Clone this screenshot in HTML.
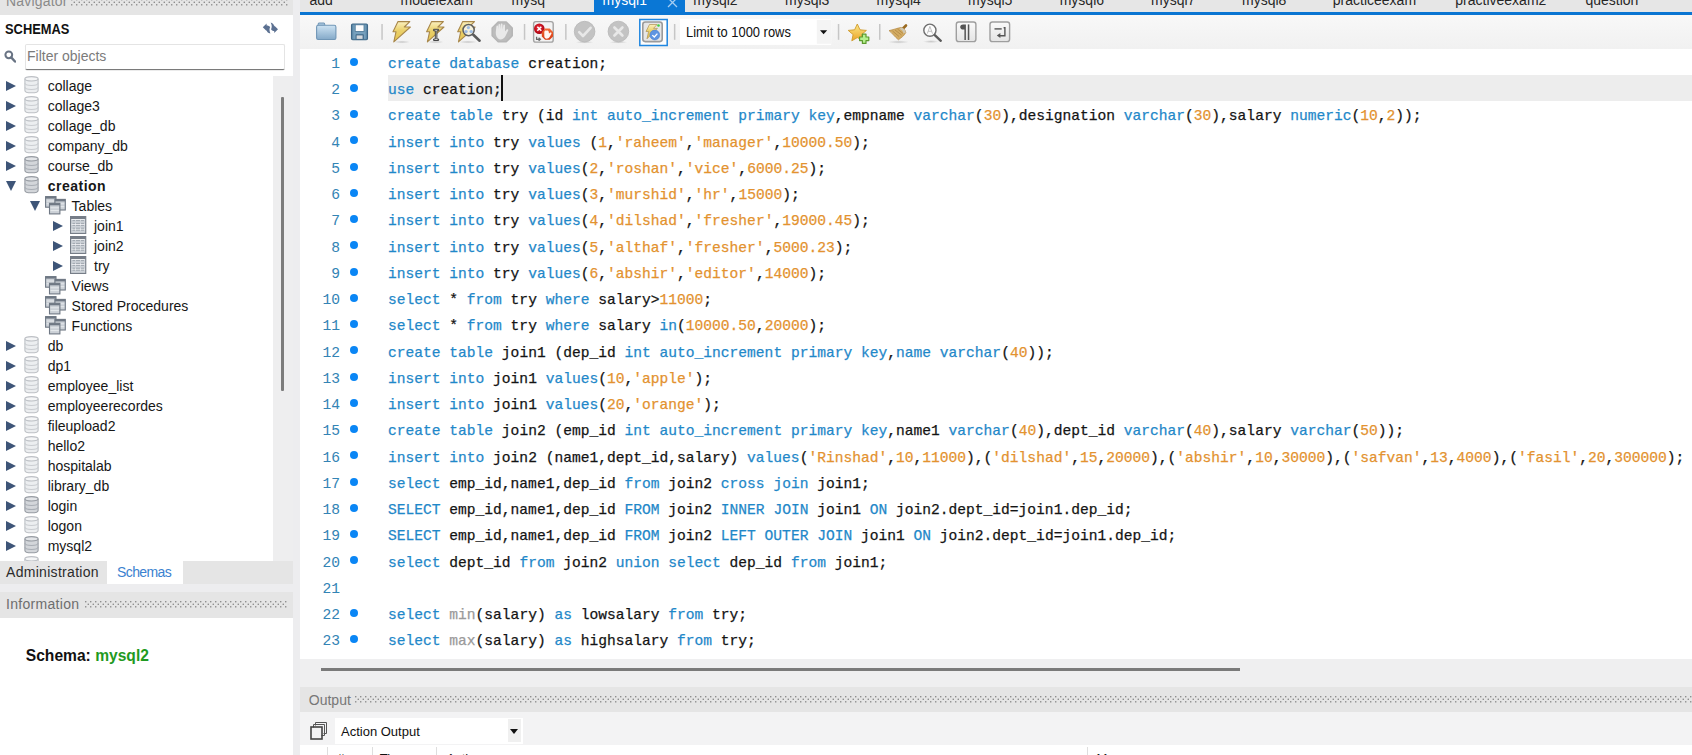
<!DOCTYPE html>
<html><head><meta charset="utf-8"><style>
*{margin:0;padding:0;box-sizing:border-box}
html,body{width:1692px;height:755px;overflow:hidden;background:#ededef;font-family:"Liberation Sans",sans-serif;position:relative}
.a{position:absolute}
.dots{background-image:radial-gradient(circle at 1.2px 1.2px,#a8a8a8 0.7px,transparent 1.2px);background-size:5px 5px}
#navh{left:0;top:0;width:292.5px;height:14.5px;background:#e5e5e5;overflow:hidden}
#schemas{left:0;top:14.5px;width:292.5px;height:546px;background:#fff;overflow:hidden}
.ui{font-size:14px;color:#1b1b1b;white-space:nowrap;line-height:1}
.tri{position:absolute;width:0;height:0;border-top:5.7px solid transparent;border-bottom:5.7px solid transparent;border-left:10.2px solid #3e5578}
.trid{position:absolute;width:0;height:0;border-left:5.6px solid transparent;border-right:5.6px solid transparent;border-top:10.4px solid #3e5578}
.lbl{position:absolute;font-size:14px;color:#161616;line-height:1;white-space:nowrap}
#tabbar{left:300px;top:0;width:1392px;height:12.2px;background:#e6e6e6;overflow:hidden}
.tab{position:absolute;top:-6.8px;font-size:14px;color:#262626;line-height:1;white-space:nowrap}
#blue{left:300px;top:12.2px;width:1392px;height:2.8px;background:#0a75d2}
#toolbar{left:300px;top:15px;width:1392px;height:34px;background:linear-gradient(#f8f8f8,#f1f1f1)}
#editor{left:300px;top:49px;width:1392px;height:609.5px;background:#fff;overflow:hidden}
.code{font-family:"Liberation Mono",monospace;font-size:14.6px;white-space:pre;position:absolute;line-height:1;color:#141414;-webkit-text-stroke:0.25px}
.ln{position:absolute;font-family:"Liberation Mono",monospace;font-size:14.6px;color:#3384b5;text-align:right;width:40px;line-height:1;-webkit-text-stroke:0.05px}
.dot{position:absolute;width:8px;height:8px;border-radius:50%;background:#0a86f5}
.k{color:#1f88c9}
.s{color:#e3922f}
.f{color:#9a9a9a}
#hband{left:300px;top:658.5px;width:1392px;height:28.7px;background:#efeff0}
#outh{left:300px;top:687.2px;width:1392px;height:25.2px;background:#e5e5e5;overflow:hidden}
#outtb{left:300px;top:712.4px;width:1392px;height:32.9px;background:#f3f3f4}
#outtbl{left:300px;top:745.3px;width:1392px;height:9.7px;background:#fff;overflow:hidden}
.sep{position:absolute;width:1.5px;height:16px;background:#bdbdbd;top:9px}
</style></head><body>
<div id="navh" class="a">
  <div class="a ui" style="left:6px;top:-5.9px;color:#8a8a8a;letter-spacing:0.2px">Navigator</div>
  <svg class="a" style="left:70.7px;top:-1.3px" width="217" height="7"><defs><pattern id="p694" width="5" height="7" patternUnits="userSpaceOnUse"><g fill="#8f8f8f"><rect x="0" y="0" width="1.4" height="1.4"/><rect x="2.6" y="2.6" width="1.4" height="1.4"/><rect x="0" y="5.1" width="1.4" height="1.4"/></g></pattern></defs><rect width="217" height="7" fill="url(#p694)" fill-opacity="1" style="fill:url(#p694)"/></svg>
</div>
<div id="schemas" class="a">
<div class="a ui" style="left:5px;top:7.4px;font-weight:bold;font-size:14px;color:#111;transform:scaleX(0.92);transform-origin:0 0">SCHEMAS</div>
<svg class="a" style="left:262px;top:7px" width="17" height="13" viewBox="0 0 17 13"><path d="M0.8 5.3 L4.6 1.5 L4.6 3.4 C6.2 3.4 7.6 4 8.2 5 C7.3 6.6 7.2 8.8 8.4 11.6 C5.9 11 4.6 9.4 4.6 7.4 L4.6 9.1 Z" fill="#5b7091"/><path d="M8.7 0.6 C11.2 1.2 12.2 3 12.2 5.3 L12.2 3.6 L16 7.3 L12.2 11 L12.2 9.1 C10.7 9.1 9.5 8.3 9.1 7.3 C10 5.4 10 3.2 8.7 0.6 Z" fill="#5b7091"/></svg>
<svg class="a" style="left:4px;top:35.5px" width="12" height="13" viewBox="0 0 12 13"><circle cx="4.8" cy="4.8" r="3.4" fill="none" stroke="#687383" stroke-width="2"/><path d="M7.2 7.4 L11 11.5" stroke="#687383" stroke-width="2.4" stroke-linecap="round"/></svg>
<div class="a" style="left:25px;top:29.8px;width:259.5px;height:25.6px;background:#fff;border:1px solid #e4e4e4;border-bottom:1.6px solid #7a7a7a;border-radius:2px;box-shadow:0 0.5px 0 #d8d8d8"></div>
<div class="a ui" style="left:27px;top:34.1px;color:#7b7b7b;font-size:14px">Filter objects</div>
<div class="a" style="left:272.7px;top:61.5px;width:20.3px;height:485px;background:#eeeeef"></div>
<div class="a" style="left:281px;top:82.5px;width:3px;height:294px;background:#7c7c7c;border-radius:1px"></div>

<div class="tri" style="left:6.4px;top:66.9px"></div>
<svg class="a" style="left:23.5px;top:61.8px" width="16" height="18" viewBox="0 0 16 18"><path d="M0.9 2.8v11.6c0 1.4 3 2.4 6.6 2.4s6.6-1 6.6-2.4V2.8" fill="#eceef0" stroke="#bdc0c5" stroke-width="1.1"/><ellipse cx="7.5" cy="2.8" rx="6.6" ry="2.2" fill="#f5f6f7" stroke="#bdc0c5" stroke-width="1.1"/><path d="M0.9 7.1c0 1.4 3 2.4 6.6 2.4s6.6-1 6.6-2.4M0.9 11.1c0 1.4 3 2.4 6.6 2.4s6.6-1 6.6-2.4" fill="none" stroke="#cacdd1" stroke-width="1.1"/></svg>
<div class="lbl" style="left:47.7px;top:64.95px;">collage</div>
<div class="tri" style="left:6.4px;top:86.9px"></div>
<svg class="a" style="left:23.5px;top:81.8px" width="16" height="18" viewBox="0 0 16 18"><path d="M0.9 2.8v11.6c0 1.4 3 2.4 6.6 2.4s6.6-1 6.6-2.4V2.8" fill="#eceef0" stroke="#bdc0c5" stroke-width="1.1"/><ellipse cx="7.5" cy="2.8" rx="6.6" ry="2.2" fill="#f5f6f7" stroke="#bdc0c5" stroke-width="1.1"/><path d="M0.9 7.1c0 1.4 3 2.4 6.6 2.4s6.6-1 6.6-2.4M0.9 11.1c0 1.4 3 2.4 6.6 2.4s6.6-1 6.6-2.4" fill="none" stroke="#cacdd1" stroke-width="1.1"/></svg>
<div class="lbl" style="left:47.7px;top:84.95px;">collage3</div>
<div class="tri" style="left:6.4px;top:106.9px"></div>
<svg class="a" style="left:23.5px;top:101.9px" width="16" height="18" viewBox="0 0 16 18"><path d="M0.9 2.8v11.6c0 1.4 3 2.4 6.6 2.4s6.6-1 6.6-2.4V2.8" fill="#eceef0" stroke="#bdc0c5" stroke-width="1.1"/><ellipse cx="7.5" cy="2.8" rx="6.6" ry="2.2" fill="#f5f6f7" stroke="#bdc0c5" stroke-width="1.1"/><path d="M0.9 7.1c0 1.4 3 2.4 6.6 2.4s6.6-1 6.6-2.4M0.9 11.1c0 1.4 3 2.4 6.6 2.4s6.6-1 6.6-2.4" fill="none" stroke="#cacdd1" stroke-width="1.1"/></svg>
<div class="lbl" style="left:47.7px;top:104.95px;">collage_db</div>
<div class="tri" style="left:6.4px;top:126.9px"></div>
<svg class="a" style="left:23.5px;top:121.9px" width="16" height="18" viewBox="0 0 16 18"><path d="M0.9 2.8v11.6c0 1.4 3 2.4 6.6 2.4s6.6-1 6.6-2.4V2.8" fill="#eceef0" stroke="#bdc0c5" stroke-width="1.1"/><ellipse cx="7.5" cy="2.8" rx="6.6" ry="2.2" fill="#f5f6f7" stroke="#bdc0c5" stroke-width="1.1"/><path d="M0.9 7.1c0 1.4 3 2.4 6.6 2.4s6.6-1 6.6-2.4M0.9 11.1c0 1.4 3 2.4 6.6 2.4s6.6-1 6.6-2.4" fill="none" stroke="#cacdd1" stroke-width="1.1"/></svg>
<div class="lbl" style="left:47.7px;top:124.95px;">company_db</div>
<div class="tri" style="left:6.4px;top:146.9px"></div>
<svg class="a" style="left:23.5px;top:141.9px" width="16" height="18" viewBox="0 0 16 18"><path d="M0.9 2.8v11.6c0 1.4 3 2.4 6.6 2.4s6.6-1 6.6-2.4V2.8" fill="#d3d6da" stroke="#969ba2" stroke-width="1.1"/><ellipse cx="7.5" cy="2.8" rx="6.6" ry="2.2" fill="#e3e5e8" stroke="#969ba2" stroke-width="1.1"/><path d="M0.9 7.1c0 1.4 3 2.4 6.6 2.4s6.6-1 6.6-2.4M0.9 11.1c0 1.4 3 2.4 6.6 2.4s6.6-1 6.6-2.4" fill="none" stroke="#a9aeb5" stroke-width="1.1"/></svg>
<div class="lbl" style="left:47.7px;top:144.95px;">course_db</div>
<div class="trid" style="left:5.7px;top:166.4px"></div>
<svg class="a" style="left:23.5px;top:161.9px" width="16" height="18" viewBox="0 0 16 18"><path d="M0.9 2.8v11.6c0 1.4 3 2.4 6.6 2.4s6.6-1 6.6-2.4V2.8" fill="#d3d6da" stroke="#969ba2" stroke-width="1.1"/><ellipse cx="7.5" cy="2.8" rx="6.6" ry="2.2" fill="#e3e5e8" stroke="#969ba2" stroke-width="1.1"/><path d="M0.9 7.1c0 1.4 3 2.4 6.6 2.4s6.6-1 6.6-2.4M0.9 11.1c0 1.4 3 2.4 6.6 2.4s6.6-1 6.6-2.4" fill="none" stroke="#a9aeb5" stroke-width="1.1"/></svg>
<div class="lbl" style="left:47.7px;top:164.95px;font-weight:bold;letter-spacing:0.5px">creation</div>
<div class="trid" style="left:30.2px;top:186.4px"></div>
<svg class="a" style="left:44.5px;top:181.1px" width="21" height="19" viewBox="0 0 21 19"><rect x="0.6" y="0.6" width="10.4" height="10.6" fill="#cbd0d6" stroke="#6f7884" stroke-width="1.1"/><rect x="0.6" y="0.6" width="10.4" height="2" fill="#6f7884"/><path d="M1.6 5.0h8.4M1.6 7.8h8.4" stroke="#eef0f2" stroke-width="0.8"/><rect x="9.9" y="3.4" width="10.4" height="10.6" fill="#cbd0d6" stroke="#6f7884" stroke-width="1.1"/><rect x="9.9" y="3.4" width="10.4" height="2" fill="#6f7884"/><path d="M10.9 7.8h8.4M10.9 10.7h8.4" stroke="#eef0f2" stroke-width="0.8"/><rect x="4.5" y="7.3" width="10.4" height="10.6" fill="#cbd0d6" stroke="#6f7884" stroke-width="1.1"/><rect x="4.5" y="7.3" width="10.4" height="2" fill="#6f7884"/><path d="M5.5 11.8h8.4M5.5 14.6h8.4" stroke="#eef0f2" stroke-width="0.8"/></svg>
<div class="lbl" style="left:71.6px;top:184.95px;">Tables</div>
<div class="tri" style="left:53.4px;top:206.9px"></div>
<svg class="a" style="left:69.5px;top:201.2px" width="17" height="18" viewBox="0 0 17 18"><rect x="0.55" y="0.55" width="15.2" height="16.9" fill="#cdd2d8" stroke="#767d87" stroke-width="1.1"/><rect x="0.55" y="0.55" width="15.2" height="2.6" fill="#767d87"/><path d="M1.5 3.6h13.3M1.5 8.4h13.3M1.5 13.2h13.3" stroke="#f2f3f5" stroke-width="1"/><path d="M2.5 4.6h2.5M6 4.6h4M11 4.6h3M2.5 7.4h2.5M6 7.4h4M11 7.4h3M2.5 9.4h2.5M6 9.4h4M11 9.4h3M2.5 12.2h2.5M6 12.2h4M11 12.2h3M2.5 14.2h2.5M6 14.2h4M11 14.2h3" stroke="#9aa1aa" stroke-width="0.9"/></svg>
<div class="lbl" style="left:94.0px;top:204.95px;">join1</div>
<div class="tri" style="left:53.4px;top:226.9px"></div>
<svg class="a" style="left:69.5px;top:221.2px" width="17" height="18" viewBox="0 0 17 18"><rect x="0.55" y="0.55" width="15.2" height="16.9" fill="#cdd2d8" stroke="#767d87" stroke-width="1.1"/><rect x="0.55" y="0.55" width="15.2" height="2.6" fill="#767d87"/><path d="M1.5 3.6h13.3M1.5 8.4h13.3M1.5 13.2h13.3" stroke="#f2f3f5" stroke-width="1"/><path d="M2.5 4.6h2.5M6 4.6h4M11 4.6h3M2.5 7.4h2.5M6 7.4h4M11 7.4h3M2.5 9.4h2.5M6 9.4h4M11 9.4h3M2.5 12.2h2.5M6 12.2h4M11 12.2h3M2.5 14.2h2.5M6 14.2h4M11 14.2h3" stroke="#9aa1aa" stroke-width="0.9"/></svg>
<div class="lbl" style="left:94.0px;top:224.95px;">join2</div>
<div class="tri" style="left:53.4px;top:246.9px"></div>
<svg class="a" style="left:69.5px;top:241.2px" width="17" height="18" viewBox="0 0 17 18"><rect x="0.55" y="0.55" width="15.2" height="16.9" fill="#cdd2d8" stroke="#767d87" stroke-width="1.1"/><rect x="0.55" y="0.55" width="15.2" height="2.6" fill="#767d87"/><path d="M1.5 3.6h13.3M1.5 8.4h13.3M1.5 13.2h13.3" stroke="#f2f3f5" stroke-width="1"/><path d="M2.5 4.6h2.5M6 4.6h4M11 4.6h3M2.5 7.4h2.5M6 7.4h4M11 7.4h3M2.5 9.4h2.5M6 9.4h4M11 9.4h3M2.5 12.2h2.5M6 12.2h4M11 12.2h3M2.5 14.2h2.5M6 14.2h4M11 14.2h3" stroke="#9aa1aa" stroke-width="0.9"/></svg>
<div class="lbl" style="left:94.0px;top:244.95px;">try</div>
<svg class="a" style="left:44.5px;top:261.1px" width="21" height="19" viewBox="0 0 21 19"><rect x="0.6" y="0.6" width="10.4" height="10.6" fill="#cbd0d6" stroke="#6f7884" stroke-width="1.1"/><rect x="0.6" y="0.6" width="10.4" height="2" fill="#6f7884"/><path d="M1.6 5.0h8.4M1.6 7.8h8.4" stroke="#eef0f2" stroke-width="0.8"/><rect x="9.9" y="3.4" width="10.4" height="10.6" fill="#cbd0d6" stroke="#6f7884" stroke-width="1.1"/><rect x="9.9" y="3.4" width="10.4" height="2" fill="#6f7884"/><path d="M10.9 7.8h8.4M10.9 10.7h8.4" stroke="#eef0f2" stroke-width="0.8"/><rect x="4.5" y="7.3" width="10.4" height="10.6" fill="#cbd0d6" stroke="#6f7884" stroke-width="1.1"/><rect x="4.5" y="7.3" width="10.4" height="2" fill="#6f7884"/><path d="M5.5 11.8h8.4M5.5 14.6h8.4" stroke="#eef0f2" stroke-width="0.8"/></svg>
<div class="lbl" style="left:71.6px;top:264.95px;">Views</div>
<svg class="a" style="left:44.5px;top:281.1px" width="21" height="19" viewBox="0 0 21 19"><rect x="0.6" y="0.6" width="10.4" height="10.6" fill="#cbd0d6" stroke="#6f7884" stroke-width="1.1"/><rect x="0.6" y="0.6" width="10.4" height="2" fill="#6f7884"/><path d="M1.6 5.0h8.4M1.6 7.8h8.4" stroke="#eef0f2" stroke-width="0.8"/><rect x="9.9" y="3.4" width="10.4" height="10.6" fill="#cbd0d6" stroke="#6f7884" stroke-width="1.1"/><rect x="9.9" y="3.4" width="10.4" height="2" fill="#6f7884"/><path d="M10.9 7.8h8.4M10.9 10.7h8.4" stroke="#eef0f2" stroke-width="0.8"/><rect x="4.5" y="7.3" width="10.4" height="10.6" fill="#cbd0d6" stroke="#6f7884" stroke-width="1.1"/><rect x="4.5" y="7.3" width="10.4" height="2" fill="#6f7884"/><path d="M5.5 11.8h8.4M5.5 14.6h8.4" stroke="#eef0f2" stroke-width="0.8"/></svg>
<div class="lbl" style="left:71.6px;top:284.95px;">Stored Procedures</div>
<svg class="a" style="left:44.5px;top:301.1px" width="21" height="19" viewBox="0 0 21 19"><rect x="0.6" y="0.6" width="10.4" height="10.6" fill="#cbd0d6" stroke="#6f7884" stroke-width="1.1"/><rect x="0.6" y="0.6" width="10.4" height="2" fill="#6f7884"/><path d="M1.6 5.0h8.4M1.6 7.8h8.4" stroke="#eef0f2" stroke-width="0.8"/><rect x="9.9" y="3.4" width="10.4" height="10.6" fill="#cbd0d6" stroke="#6f7884" stroke-width="1.1"/><rect x="9.9" y="3.4" width="10.4" height="2" fill="#6f7884"/><path d="M10.9 7.8h8.4M10.9 10.7h8.4" stroke="#eef0f2" stroke-width="0.8"/><rect x="4.5" y="7.3" width="10.4" height="10.6" fill="#cbd0d6" stroke="#6f7884" stroke-width="1.1"/><rect x="4.5" y="7.3" width="10.4" height="2" fill="#6f7884"/><path d="M5.5 11.8h8.4M5.5 14.6h8.4" stroke="#eef0f2" stroke-width="0.8"/></svg>
<div class="lbl" style="left:71.6px;top:304.95px;">Functions</div>
<div class="tri" style="left:6.4px;top:326.9px"></div>
<svg class="a" style="left:23.5px;top:321.9px" width="16" height="18" viewBox="0 0 16 18"><path d="M0.9 2.8v11.6c0 1.4 3 2.4 6.6 2.4s6.6-1 6.6-2.4V2.8" fill="#eceef0" stroke="#bdc0c5" stroke-width="1.1"/><ellipse cx="7.5" cy="2.8" rx="6.6" ry="2.2" fill="#f5f6f7" stroke="#bdc0c5" stroke-width="1.1"/><path d="M0.9 7.1c0 1.4 3 2.4 6.6 2.4s6.6-1 6.6-2.4M0.9 11.1c0 1.4 3 2.4 6.6 2.4s6.6-1 6.6-2.4" fill="none" stroke="#cacdd1" stroke-width="1.1"/></svg>
<div class="lbl" style="left:47.7px;top:324.95px;">db</div>
<div class="tri" style="left:6.4px;top:346.9px"></div>
<svg class="a" style="left:23.5px;top:341.9px" width="16" height="18" viewBox="0 0 16 18"><path d="M0.9 2.8v11.6c0 1.4 3 2.4 6.6 2.4s6.6-1 6.6-2.4V2.8" fill="#eceef0" stroke="#bdc0c5" stroke-width="1.1"/><ellipse cx="7.5" cy="2.8" rx="6.6" ry="2.2" fill="#f5f6f7" stroke="#bdc0c5" stroke-width="1.1"/><path d="M0.9 7.1c0 1.4 3 2.4 6.6 2.4s6.6-1 6.6-2.4M0.9 11.1c0 1.4 3 2.4 6.6 2.4s6.6-1 6.6-2.4" fill="none" stroke="#cacdd1" stroke-width="1.1"/></svg>
<div class="lbl" style="left:47.7px;top:344.95px;">dp1</div>
<div class="tri" style="left:6.4px;top:366.9px"></div>
<svg class="a" style="left:23.5px;top:361.9px" width="16" height="18" viewBox="0 0 16 18"><path d="M0.9 2.8v11.6c0 1.4 3 2.4 6.6 2.4s6.6-1 6.6-2.4V2.8" fill="#eceef0" stroke="#bdc0c5" stroke-width="1.1"/><ellipse cx="7.5" cy="2.8" rx="6.6" ry="2.2" fill="#f5f6f7" stroke="#bdc0c5" stroke-width="1.1"/><path d="M0.9 7.1c0 1.4 3 2.4 6.6 2.4s6.6-1 6.6-2.4M0.9 11.1c0 1.4 3 2.4 6.6 2.4s6.6-1 6.6-2.4" fill="none" stroke="#cacdd1" stroke-width="1.1"/></svg>
<div class="lbl" style="left:47.7px;top:364.95px;">employee_list</div>
<div class="tri" style="left:6.4px;top:386.9px"></div>
<svg class="a" style="left:23.5px;top:381.9px" width="16" height="18" viewBox="0 0 16 18"><path d="M0.9 2.8v11.6c0 1.4 3 2.4 6.6 2.4s6.6-1 6.6-2.4V2.8" fill="#eceef0" stroke="#bdc0c5" stroke-width="1.1"/><ellipse cx="7.5" cy="2.8" rx="6.6" ry="2.2" fill="#f5f6f7" stroke="#bdc0c5" stroke-width="1.1"/><path d="M0.9 7.1c0 1.4 3 2.4 6.6 2.4s6.6-1 6.6-2.4M0.9 11.1c0 1.4 3 2.4 6.6 2.4s6.6-1 6.6-2.4" fill="none" stroke="#cacdd1" stroke-width="1.1"/></svg>
<div class="lbl" style="left:47.7px;top:384.95px;">employeerecordes</div>
<div class="tri" style="left:6.4px;top:406.9px"></div>
<svg class="a" style="left:23.5px;top:401.9px" width="16" height="18" viewBox="0 0 16 18"><path d="M0.9 2.8v11.6c0 1.4 3 2.4 6.6 2.4s6.6-1 6.6-2.4V2.8" fill="#eceef0" stroke="#bdc0c5" stroke-width="1.1"/><ellipse cx="7.5" cy="2.8" rx="6.6" ry="2.2" fill="#f5f6f7" stroke="#bdc0c5" stroke-width="1.1"/><path d="M0.9 7.1c0 1.4 3 2.4 6.6 2.4s6.6-1 6.6-2.4M0.9 11.1c0 1.4 3 2.4 6.6 2.4s6.6-1 6.6-2.4" fill="none" stroke="#cacdd1" stroke-width="1.1"/></svg>
<div class="lbl" style="left:47.7px;top:404.95px;">fileupload2</div>
<div class="tri" style="left:6.4px;top:426.9px"></div>
<svg class="a" style="left:23.5px;top:421.9px" width="16" height="18" viewBox="0 0 16 18"><path d="M0.9 2.8v11.6c0 1.4 3 2.4 6.6 2.4s6.6-1 6.6-2.4V2.8" fill="#eceef0" stroke="#bdc0c5" stroke-width="1.1"/><ellipse cx="7.5" cy="2.8" rx="6.6" ry="2.2" fill="#f5f6f7" stroke="#bdc0c5" stroke-width="1.1"/><path d="M0.9 7.1c0 1.4 3 2.4 6.6 2.4s6.6-1 6.6-2.4M0.9 11.1c0 1.4 3 2.4 6.6 2.4s6.6-1 6.6-2.4" fill="none" stroke="#cacdd1" stroke-width="1.1"/></svg>
<div class="lbl" style="left:47.7px;top:424.95px;">hello2</div>
<div class="tri" style="left:6.4px;top:446.9px"></div>
<svg class="a" style="left:23.5px;top:441.9px" width="16" height="18" viewBox="0 0 16 18"><path d="M0.9 2.8v11.6c0 1.4 3 2.4 6.6 2.4s6.6-1 6.6-2.4V2.8" fill="#eceef0" stroke="#bdc0c5" stroke-width="1.1"/><ellipse cx="7.5" cy="2.8" rx="6.6" ry="2.2" fill="#f5f6f7" stroke="#bdc0c5" stroke-width="1.1"/><path d="M0.9 7.1c0 1.4 3 2.4 6.6 2.4s6.6-1 6.6-2.4M0.9 11.1c0 1.4 3 2.4 6.6 2.4s6.6-1 6.6-2.4" fill="none" stroke="#cacdd1" stroke-width="1.1"/></svg>
<div class="lbl" style="left:47.7px;top:444.95px;">hospitalab</div>
<div class="tri" style="left:6.4px;top:466.9px"></div>
<svg class="a" style="left:23.5px;top:461.9px" width="16" height="18" viewBox="0 0 16 18"><path d="M0.9 2.8v11.6c0 1.4 3 2.4 6.6 2.4s6.6-1 6.6-2.4V2.8" fill="#eceef0" stroke="#bdc0c5" stroke-width="1.1"/><ellipse cx="7.5" cy="2.8" rx="6.6" ry="2.2" fill="#f5f6f7" stroke="#bdc0c5" stroke-width="1.1"/><path d="M0.9 7.1c0 1.4 3 2.4 6.6 2.4s6.6-1 6.6-2.4M0.9 11.1c0 1.4 3 2.4 6.6 2.4s6.6-1 6.6-2.4" fill="none" stroke="#cacdd1" stroke-width="1.1"/></svg>
<div class="lbl" style="left:47.7px;top:464.95px;">library_db</div>
<div class="tri" style="left:6.4px;top:486.9px"></div>
<svg class="a" style="left:23.5px;top:481.9px" width="16" height="18" viewBox="0 0 16 18"><path d="M0.9 2.8v11.6c0 1.4 3 2.4 6.6 2.4s6.6-1 6.6-2.4V2.8" fill="#d3d6da" stroke="#969ba2" stroke-width="1.1"/><ellipse cx="7.5" cy="2.8" rx="6.6" ry="2.2" fill="#e3e5e8" stroke="#969ba2" stroke-width="1.1"/><path d="M0.9 7.1c0 1.4 3 2.4 6.6 2.4s6.6-1 6.6-2.4M0.9 11.1c0 1.4 3 2.4 6.6 2.4s6.6-1 6.6-2.4" fill="none" stroke="#a9aeb5" stroke-width="1.1"/></svg>
<div class="lbl" style="left:47.7px;top:484.95px;">login</div>
<div class="tri" style="left:6.4px;top:506.9px"></div>
<svg class="a" style="left:23.5px;top:501.8px" width="16" height="18" viewBox="0 0 16 18"><path d="M0.9 2.8v11.6c0 1.4 3 2.4 6.6 2.4s6.6-1 6.6-2.4V2.8" fill="#eceef0" stroke="#bdc0c5" stroke-width="1.1"/><ellipse cx="7.5" cy="2.8" rx="6.6" ry="2.2" fill="#f5f6f7" stroke="#bdc0c5" stroke-width="1.1"/><path d="M0.9 7.1c0 1.4 3 2.4 6.6 2.4s6.6-1 6.6-2.4M0.9 11.1c0 1.4 3 2.4 6.6 2.4s6.6-1 6.6-2.4" fill="none" stroke="#cacdd1" stroke-width="1.1"/></svg>
<div class="lbl" style="left:47.7px;top:504.95px;">logon</div>
<div class="tri" style="left:6.4px;top:526.9px"></div>
<svg class="a" style="left:23.5px;top:521.8px" width="16" height="18" viewBox="0 0 16 18"><path d="M0.9 2.8v11.6c0 1.4 3 2.4 6.6 2.4s6.6-1 6.6-2.4V2.8" fill="#d3d6da" stroke="#969ba2" stroke-width="1.1"/><ellipse cx="7.5" cy="2.8" rx="6.6" ry="2.2" fill="#e3e5e8" stroke="#969ba2" stroke-width="1.1"/><path d="M0.9 7.1c0 1.4 3 2.4 6.6 2.4s6.6-1 6.6-2.4M0.9 11.1c0 1.4 3 2.4 6.6 2.4s6.6-1 6.6-2.4" fill="none" stroke="#a9aeb5" stroke-width="1.1"/></svg>
<div class="lbl" style="left:47.7px;top:524.95px;">mysql2</div>
<div class="tri" style="left:6.4px;top:546.9px"></div>
<svg class="a" style="left:23.5px;top:541.8px" width="16" height="18" viewBox="0 0 16 18"><path d="M0.9 2.8v11.6c0 1.4 3 2.4 6.6 2.4s6.6-1 6.6-2.4V2.8" fill="#eceef0" stroke="#bdc0c5" stroke-width="1.1"/><ellipse cx="7.5" cy="2.8" rx="6.6" ry="2.2" fill="#f5f6f7" stroke="#bdc0c5" stroke-width="1.1"/><path d="M0.9 7.1c0 1.4 3 2.4 6.6 2.4s6.6-1 6.6-2.4M0.9 11.1c0 1.4 3 2.4 6.6 2.4s6.6-1 6.6-2.4" fill="none" stroke="#cacdd1" stroke-width="1.1"/></svg></div>

<div class="a" style="left:0;top:560.5px;width:292.5px;height:23.2px;background:#e5e5e5"></div>
<div class="a" style="left:107.3px;top:560.5px;width:75.3px;height:23.2px;background:#fff"></div>
<div class="a ui" style="left:6px;top:564.5px;color:#2b2b2b;letter-spacing:0.3px">Administration</div>
<div class="a ui" style="left:117px;top:564.5px;color:#3b82d0;letter-spacing:-0.6px">Schemas</div>
<div class="a" style="left:0;top:591.8px;width:292.5px;height:25.9px;background:#e5e5e5"></div>
<div class="a ui" style="left:6px;top:597.0px;color:#6e6e6e;letter-spacing:0.3px">Information</div>
<svg class="a" style="left:84.9px;top:601.4px" width="202" height="7"><defs><pattern id="p6863" width="5" height="7" patternUnits="userSpaceOnUse"><g fill="#8f8f8f"><rect x="0" y="0" width="1.4" height="1.4"/><rect x="2.6" y="2.6" width="1.4" height="1.4"/><rect x="0" y="5.1" width="1.4" height="1.4"/></g></pattern></defs><rect width="202" height="7" fill="url(#p6863)" fill-opacity="1" style="fill:url(#p6863)"/></svg>
<div class="a" style="left:0;top:617.7px;width:292.5px;height:137.3px;background:#fff"></div>
<div class="a ui" style="left:25.8px;top:647.9px;font-weight:bold;font-size:15.6px;color:#111">Schema: <span style="color:#1f9a22">mysql2</span></div>

<div id="tabbar" class="a"><div class="tab" style="left:9.5px">add</div><div class="tab" style="left:100.5px">modelexam</div><div class="tab" style="left:211.6px">mysq</div><div class="tab" style="left:393.3px">mysql2</div><div class="tab" style="left:485.0px">mysql3</div><div class="tab" style="left:576.5px">mysql4</div><div class="tab" style="left:668.0px">mysql5</div><div class="tab" style="left:759.7px">mysql6</div><div class="tab" style="left:851.0px">mysql7</div><div class="tab" style="left:942.0px">mysql8</div><div class="tab" style="left:1032.8px">practiceexam</div><div class="tab" style="left:1155.3px">practiveexam2</div><div class="tab" style="left:1285.4px">question</div><div class="a" style="left:294.3px;top:0;width:90.6px;height:12.5px;background:#0a77d5"></div><div class="tab" style="left:302.6px;color:#fff">mysql1</div><svg class="a" style="left:367px;top:-3px" width="11" height="11"><path d="M1 1L10 10M10 1L1 10" stroke="#a5cdf2" stroke-width="1.3"/></svg></div>
<div id="blue" class="a"></div>
<div id="toolbar" class="a"><svg class="a" style="left:0;top:0" width="1392" height="34" viewBox="300 15 1392 34">
<defs>
<linearGradient id="gf" x1="0" y1="0" x2="0" y2="1"><stop offset="0" stop-color="#cde3f3"/><stop offset="1" stop-color="#84a9c8"/></linearGradient>
<linearGradient id="gl" x1="0" y1="0" x2="0" y2="1"><stop offset="0" stop-color="#fbf1c0"/><stop offset="0.45" stop-color="#ead06a"/><stop offset="1" stop-color="#e6c44c"/></linearGradient>
<linearGradient id="gs" x1="0" y1="0" x2="0" y2="1"><stop offset="0" stop-color="#fbe98a"/><stop offset="1" stop-color="#eba428"/></linearGradient>
<linearGradient id="gb" x1="0" y1="0" x2="0" y2="1"><stop offset="0" stop-color="#fafafa"/><stop offset="1" stop-color="#e4e4e4"/></linearGradient>
<radialGradient id="gsh" cx="0.5" cy="0.5" r="0.5"><stop offset="0" stop-color="#000" stop-opacity="0.18"/><stop offset="1" stop-color="#000" stop-opacity="0"/></radialGradient>
<g id="bolt"><path d="M398 21.6 L409.8 21.6 L404.3 27 L410.4 27 L393.8 41.8 L396 31.8 L393 31.8 Z" fill="url(#gl)" stroke="#a8874a" stroke-width="1.1" stroke-linejoin="round"/></g>
</defs>
<!-- folder -->
<path d="M317.8 25.5 L318.5 23 L324.3 23 L325 25.5 Z" fill="#a9c6de" stroke="#7096b6" stroke-width="1"/>
<rect x="316.6" y="25.3" width="19.3" height="14.2" rx="1.6" fill="url(#gf)" stroke="#7096b6" stroke-width="1.1"/>
<!-- floppy -->
<rect x="351.5" y="24" width="16" height="15.8" rx="1.2" fill="#5f8aa9" stroke="#3f6888" stroke-width="1.1"/>
<rect x="353.3" y="24.8" width="12.4" height="14" fill="#76a0bd"/>
<rect x="355.2" y="24.8" width="8.8" height="6.6" fill="#fdfdfd" stroke="#4a7595" stroke-width="0.8"/>
<rect x="355.6" y="34.3" width="8.2" height="5.2" rx="0.6" fill="#3f6888"/>
<rect x="356.6" y="35.4" width="6" height="3.5" fill="#d4d8dc"/>
<!-- separators -->
<rect x="381.3" y="24" width="1.5" height="15.8" fill="#c6c6c6"/>
<rect x="523.8" y="24" width="1.5" height="15.8" fill="#c6c6c6"/>
<rect x="565.1" y="24" width="1.5" height="15.8" fill="#c6c6c6"/>
<rect x="673.9" y="24" width="1.5" height="15.8" fill="#c6c6c6"/>
<rect x="837.8" y="24" width="1.5" height="15.8" fill="#c6c6c6"/>
<rect x="879" y="24" width="1.5" height="15.8" fill="#c6c6c6"/>
<!-- bolts -->
<ellipse cx="402" cy="42" rx="8" ry="1.6" fill="url(#gsh)"/>
<use href="#bolt"/>
<ellipse cx="435.6" cy="42" rx="8" ry="1.6" fill="url(#gsh)"/>
<use href="#bolt" x="33.6"/>
<path d="M433.6 29.3 H438.6 V30.8 H436.9 V39 H438.6 V40.5 H433.6 V39 H435.3 V30.8 H433.6 Z" fill="#d8d8d8" stroke="#333" stroke-width="0.9"/>
<ellipse cx="468" cy="42" rx="9" ry="1.6" fill="url(#gsh)"/>
<use href="#bolt" x="64.7"/>
<circle cx="468.6" cy="30.1" r="5.6" fill="#f4f0dc" stroke="#5e5e5e" stroke-width="1.5"/>
<circle cx="468.4" cy="27.6" r="1.6" fill="#9dbbe3"/><circle cx="466" cy="31.6" r="1.7" fill="#9dbbe3"/><circle cx="471.2" cy="31.6" r="1.7" fill="#9dbbe3"/>
<path d="M473.3 34.8 L479.6 40.7" stroke="#5a5a5a" stroke-width="2.6" stroke-linecap="round"/>
<!-- stop (disabled) -->
<path d="M498.2 22 H506.2 L512.2 28 V35.8 L506.2 41.8 H498.2 L492.2 35.8 V28 Z" fill="#bcbcbc" stroke="#b6b6b6" stroke-width="1.6" stroke-linejoin="round"/>
<path d="M498 38.5 C495.5 36 495.5 33 496 30 L496.4 26.5 C496.5 25.3 498 25.3 498.1 26.5 L498.2 29.5 L498.5 24.8 C498.6 23.6 500.1 23.6 500.2 24.8 L500.4 29.3 L500.8 24.4 C500.9 23.2 502.4 23.2 502.5 24.4 L502.7 29.4 L503.3 25.2 C503.4 24.1 504.9 24.1 505 25.2 L505 31.5 L506.6 29.6 C507.5 28.7 508.7 29.4 508.2 30.5 L505.4 36.2 C504 39 500.5 40.5 498 38.5 Z" fill="#e9e9e9"/>
<!-- stop on error -->
<rect x="533.6" y="21.6" width="19.6" height="20.5" rx="2.2" fill="#f3f3f3" stroke="#a3a3a3" stroke-width="1.4"/>
<path d="M536.6 36.8 V39.3 H540 M538.6 37.8 L540.4 39.3 L538.6 40.8" fill="none" stroke="#666" stroke-width="1.3"/>
<radialGradient id="gr" cx="0.45" cy="0.4" r="0.6"><stop offset="0" stop-color="#f03040"/><stop offset="1" stop-color="#a8000c"/></radialGradient><circle cx="539.3" cy="28.8" r="5.3" fill="url(#gr)"/>
<path d="M537.3 26.8 L541.3 30.8 M541.3 26.8 L537.3 30.8" stroke="#fff" stroke-width="1.6"/>
<linearGradient id="go" x1="0" y1="0" x2="0" y2="1"><stop offset="0" stop-color="#f26a36"/><stop offset="1" stop-color="#d4360f"/></linearGradient><path d="M545.1 28.6 H549.7 L553 31.9 V36.5 L549.7 39.8 H545.1 L541.8 36.5 V31.9 Z" fill="url(#go)"/>
<path d="M544.3 32.2 C544.3 31 545.3 30.4 546.2 30.7 C547.2 30.1 548.4 30.5 548.7 31.5 L549 33.6 L550.3 32.6 C551.1 32.1 551.9 32.9 551.4 33.7 L549.9 36.6 C549.1 38.1 547.9 38.8 546.7 38.8 C545.2 38.8 544.3 37.6 544.3 36.1 Z" fill="#fff" opacity="0.95"/>
<!-- commit / rollback disabled -->
<ellipse cx="584.6" cy="42.2" rx="9" ry="1.4" fill="url(#gsh)"/>
<circle cx="584.6" cy="31.6" r="10.3" fill="#c3c3c3" stroke="#b6b6b6" stroke-width="0.8"/>
<path d="M579.2 32.2 L583 36 L590.6 27.8" fill="none" stroke="#e8e8e8" stroke-width="2.6" stroke-linecap="round" stroke-linejoin="round"/>
<ellipse cx="618.4" cy="42.2" rx="9" ry="1.4" fill="url(#gsh)"/>
<circle cx="618.4" cy="31.5" r="10.3" fill="#c3c3c3" stroke="#b6b6b6" stroke-width="0.8"/>
<path d="M614.4 27.5 L622.4 35.5 M622.4 27.5 L614.4 35.5" stroke="#e8e8e8" stroke-width="2.6" stroke-linecap="round"/>
<!-- autocommit toggle -->
<rect x="639.8" y="19.5" width="27.4" height="26" fill="#fdfdfd" stroke="#1f86e0" stroke-width="1.5"/>
<rect x="642.8" y="22" width="19.4" height="19.6" rx="2.5" fill="#e6e6e6" stroke="#9a9a9a" stroke-width="1.6"/>
<path d="M649.5 24.5 L657 24.5 L653.5 28.4 L657.4 28.4 L647 38.8 L648.6 31.5 L646 31.5 Z" fill="url(#gl)" stroke="#b09050" stroke-width="0.7"/>
<circle cx="658.5" cy="25.5" r="1.3" fill="#3fcf3f"/>
<circle cx="654.8" cy="35" r="4.9" fill="#5f95e2" stroke="#4a7fcf" stroke-width="0.6"/>
<path d="M652.3 35.1 L654.3 37 L657.4 33.6" fill="none" stroke="#fff" stroke-width="1.3"/>
<!-- combo -->
<rect x="680" y="18.8" width="151.2" height="26.1" fill="#fff"/>
<rect x="816.8" y="20" width="14.2" height="23.8" fill="#f4f4f4"/>
<path d="M820 30.2 H827.2 L823.6 34.2 Z" fill="#111"/>
<!-- star -->
<path d="M857.3 24 L860 29.8 L866.4 30.4 L861.6 34.6 L863 40.8 L857.3 37.6 L851.8 40.8 L853.1 34.6 L848.2 30.4 L854.6 29.8 Z" fill="url(#gs)" stroke="#cf9a2a" stroke-width="0.9" stroke-linejoin="round"/>
<path d="M862.4 34.2 H866 V37 H868.8 V40.6 H866 V43.4 H862.4 V40.6 H859.6 V37 H862.4 Z" fill="#b4f08e" stroke="#5c9a2e" stroke-width="1.2" stroke-linejoin="round"/>
<!-- broom -->
<ellipse cx="898.5" cy="42" rx="10.5" ry="1.7" fill="url(#gsh)"/>
<path d="M902.5 29 L906 25.5" stroke="#9a6a20" stroke-width="2.6" stroke-linecap="round"/>
<path d="M889 30.6 C893 29.8 897.5 28 901 27.5 C903.5 27.8 905.5 30 905.8 32.5 C904.5 35.5 901 38 898.4 39.8 C895 37 892 33 889 30.6 Z" fill="#d3ab62" stroke="#b48a45" stroke-width="0.7"/>
<path d="M901 27.5 C903.5 27.8 905.5 30 905.8 32.5 L903.6 33.4 C903 31.4 901.4 29.6 899.5 29.1 Z" fill="#cfc6b0"/>
<path d="M892.5 31 L899 36.5 M895 30 L901.5 35 M897.5 29 L903 33.5" stroke="#a57c3a" stroke-width="0.6"/>
<!-- find -->
<ellipse cx="931" cy="41.6" rx="8" ry="1.5" fill="url(#gsh)"/>
<circle cx="929.9" cy="30.2" r="6.1" fill="#fdfdfd" stroke="#6e6e6e" stroke-width="1.4"/>
<path d="M927.3 33.6 L929.9 26.4 L932.5 33.6 M928.2 31.3 H931.6" fill="none" stroke="#b8b8b8" stroke-width="0.9"/>
<path d="M934.8 35.2 L940.8 40.8" stroke="#5c5c5c" stroke-width="2.4" stroke-linecap="round"/>
<!-- pilcrow box -->
<rect x="956.3" y="22" width="19.6" height="19.6" rx="2.4" fill="url(#gb)" stroke="#9e9e9e" stroke-width="1.4"/>
<path d="M965.8 24.4 H963.2 C961 24.4 960.2 25.8 960.2 27 C960.2 28.4 961.2 29.6 963.2 29.6 H964.4 V40 H965.9 V24.4 Z" fill="#555"/>
<rect x="967.8" y="24.4" width="1.5" height="15.6" fill="#555"/>
<!-- wrap box -->
<rect x="990" y="22" width="19.6" height="19.6" rx="2.4" fill="url(#gb)" stroke="#9e9e9e" stroke-width="1.4"/>
<rect x="994.5" y="28.2" width="7.2" height="1.4" fill="#555"/>
<path d="M1003.6 27.8 H1004.9 V35.7 H999.2" fill="none" stroke="#555" stroke-width="1.4"/>
<path d="M996.8 35.6 L1000.4 33.1 V38.1 Z" fill="#555"/>
</svg>
<div class="a ui" style="left:386px;top:9.5px;font-size:14.6px;color:#111;transform:scaleX(0.886);transform-origin:0 0">Limit to 1000 rows</div>
</div>
<div id="editor" class="a"><div class="a" style="left:88px;top:26.00px;width:1304px;height:26.20px;background:#ededed"></div>
<div class="ln" style="left:0.0px;top:8.00px">1</div>
<div class="dot" style="left:49.8px;top:8.60px"></div>
<div class="code" style="left:88.00px;top:8.00px"><span class="k">create</span> <span class="k">database</span> creation;</div>
<div class="ln" style="left:0.0px;top:34.00px">2</div>
<div class="dot" style="left:49.8px;top:34.85px"></div>
<div class="code" style="left:88.00px;top:34.00px"><span class="k">use</span> creation;</div>
<div class="ln" style="left:0.0px;top:60.00px">3</div>
<div class="dot" style="left:49.8px;top:61.10px"></div>
<div class="code" style="left:88.00px;top:60.00px"><span class="k">create</span> <span class="k">table</span> try (id <span class="k">int</span> <span class="k">auto_increment</span> <span class="k">primary</span> <span class="k">key</span>,empname <span class="k">varchar</span>(<span class="s">30</span>),designation <span class="k">varchar</span>(<span class="s">30</span>),salary <span class="k">numeric</span>(<span class="s">10</span>,<span class="s">2</span>));</div>
<div class="ln" style="left:0.0px;top:87.00px">4</div>
<div class="dot" style="left:49.8px;top:87.35px"></div>
<div class="code" style="left:88.00px;top:87.00px"><span class="k">insert</span> <span class="k">into</span> try <span class="k">values</span> (<span class="s">1</span>,<span class="s">&#x27;raheem&#x27;</span>,<span class="s">&#x27;manager&#x27;</span>,<span class="s">10000.50</span>);</div>
<div class="ln" style="left:0.0px;top:113.00px">5</div>
<div class="dot" style="left:49.8px;top:113.60px"></div>
<div class="code" style="left:88.00px;top:113.00px"><span class="k">insert</span> <span class="k">into</span> try <span class="k">values</span>(<span class="s">2</span>,<span class="s">&#x27;roshan&#x27;</span>,<span class="s">&#x27;vice&#x27;</span>,<span class="s">6000.25</span>);</div>
<div class="ln" style="left:0.0px;top:139.00px">6</div>
<div class="dot" style="left:49.8px;top:139.85px"></div>
<div class="code" style="left:88.00px;top:139.00px"><span class="k">insert</span> <span class="k">into</span> try <span class="k">values</span>(<span class="s">3</span>,<span class="s">&#x27;murshid&#x27;</span>,<span class="s">&#x27;hr&#x27;</span>,<span class="s">15000</span>);</div>
<div class="ln" style="left:0.0px;top:165.00px">7</div>
<div class="dot" style="left:49.8px;top:166.10px"></div>
<div class="code" style="left:88.00px;top:165.00px"><span class="k">insert</span> <span class="k">into</span> try <span class="k">values</span>(<span class="s">4</span>,<span class="s">&#x27;dilshad&#x27;</span>,<span class="s">&#x27;fresher&#x27;</span>,<span class="s">19000.45</span>);</div>
<div class="ln" style="left:0.0px;top:192.00px">8</div>
<div class="dot" style="left:49.8px;top:192.35px"></div>
<div class="code" style="left:88.00px;top:192.00px"><span class="k">insert</span> <span class="k">into</span> try <span class="k">values</span>(<span class="s">5</span>,<span class="s">&#x27;althaf&#x27;</span>,<span class="s">&#x27;fresher&#x27;</span>,<span class="s">5000.23</span>);</div>
<div class="ln" style="left:0.0px;top:218.00px">9</div>
<div class="dot" style="left:49.8px;top:218.60px"></div>
<div class="code" style="left:88.00px;top:218.00px"><span class="k">insert</span> <span class="k">into</span> try <span class="k">values</span>(<span class="s">6</span>,<span class="s">&#x27;abshir&#x27;</span>,<span class="s">&#x27;editor&#x27;</span>,<span class="s">14000</span>);</div>
<div class="ln" style="left:0.0px;top:244.00px">10</div>
<div class="dot" style="left:49.8px;top:244.85px"></div>
<div class="code" style="left:88.00px;top:244.00px"><span class="k">select</span> * <span class="k">from</span> try <span class="k">where</span> salary&gt;<span class="s">11000</span>;</div>
<div class="ln" style="left:0.0px;top:270.00px">11</div>
<div class="dot" style="left:49.8px;top:271.10px"></div>
<div class="code" style="left:88.00px;top:270.00px"><span class="k">select</span> * <span class="k">from</span> try <span class="k">where</span> salary <span class="k">in</span>(<span class="s">10000.50</span>,<span class="s">20000</span>);</div>
<div class="ln" style="left:0.0px;top:297.00px">12</div>
<div class="dot" style="left:49.8px;top:297.35px"></div>
<div class="code" style="left:88.00px;top:297.00px"><span class="k">create</span> <span class="k">table</span> join1 (dep_id <span class="k">int</span> <span class="k">auto_increment</span> <span class="k">primary</span> <span class="k">key</span>,<span class="k">name</span> <span class="k">varchar</span>(<span class="s">40</span>));</div>
<div class="ln" style="left:0.0px;top:323.00px">13</div>
<div class="dot" style="left:49.8px;top:323.60px"></div>
<div class="code" style="left:88.00px;top:323.00px"><span class="k">insert</span> <span class="k">into</span> join1 <span class="k">values</span>(<span class="s">10</span>,<span class="s">&#x27;apple&#x27;</span>);</div>
<div class="ln" style="left:0.0px;top:349.00px">14</div>
<div class="dot" style="left:49.8px;top:349.85px"></div>
<div class="code" style="left:88.00px;top:349.00px"><span class="k">insert</span> <span class="k">into</span> join1 <span class="k">values</span>(<span class="s">20</span>,<span class="s">&#x27;orange&#x27;</span>);</div>
<div class="ln" style="left:0.0px;top:375.00px">15</div>
<div class="dot" style="left:49.8px;top:376.10px"></div>
<div class="code" style="left:88.00px;top:375.00px"><span class="k">create</span> <span class="k">table</span> join2 (emp_id <span class="k">int</span> <span class="k">auto_increment</span> <span class="k">primary</span> <span class="k">key</span>,name1 <span class="k">varchar</span>(<span class="s">40</span>),dept_id <span class="k">varchar</span>(<span class="s">40</span>),salary <span class="k">varchar</span>(<span class="s">50</span>));</div>
<div class="ln" style="left:0.0px;top:402.00px">16</div>
<div class="dot" style="left:49.8px;top:402.35px"></div>
<div class="code" style="left:88.00px;top:402.00px"><span class="k">insert</span> <span class="k">into</span> join2 (name1,dept_id,salary) <span class="k">values</span>(<span class="s">&#x27;Rinshad&#x27;</span>,<span class="s">10</span>,<span class="s">11000</span>),(<span class="s">&#x27;dilshad&#x27;</span>,<span class="s">15</span>,<span class="s">20000</span>),(<span class="s">&#x27;abshir&#x27;</span>,<span class="s">10</span>,<span class="s">30000</span>),(<span class="s">&#x27;safvan&#x27;</span>,<span class="s">13</span>,<span class="s">4000</span>),(<span class="s">&#x27;fasil&#x27;</span>,<span class="s">20</span>,<span class="s">300000</span>);</div>
<div class="ln" style="left:0.0px;top:428.00px">17</div>
<div class="dot" style="left:49.8px;top:428.60px"></div>
<div class="code" style="left:88.00px;top:428.00px"><span class="k">select</span> emp_id,name1,dep_id <span class="k">from</span> join2 <span class="k">cross</span> <span class="k">join</span> join1;</div>
<div class="ln" style="left:0.0px;top:454.00px">18</div>
<div class="dot" style="left:49.8px;top:454.85px"></div>
<div class="code" style="left:88.00px;top:454.00px"><span class="k">SELECT</span> emp_id,name1,dep_id <span class="k">FROM</span> join2 <span class="k">INNER</span> <span class="k">JOIN</span> join1 <span class="k">ON</span> join2.dept_id=join1.dep_id;</div>
<div class="ln" style="left:0.0px;top:480.00px">19</div>
<div class="dot" style="left:49.8px;top:481.10px"></div>
<div class="code" style="left:88.00px;top:480.00px"><span class="k">SELECT</span> emp_id,name1,dep_id <span class="k">FROM</span> join2 <span class="k">LEFT</span> <span class="k">OUTER</span> <span class="k">JOIN</span> join1 <span class="k">ON</span> join2.dept_id=join1.dep_id;</div>
<div class="ln" style="left:0.0px;top:507.00px">20</div>
<div class="dot" style="left:49.8px;top:507.35px"></div>
<div class="code" style="left:88.00px;top:507.00px"><span class="k">select</span> dept_id <span class="k">from</span> join2 <span class="k">union</span> <span class="k">select</span> dep_id <span class="k">from</span> join1;</div>
<div class="ln" style="left:0.0px;top:533.00px">21</div>
<div class="ln" style="left:0.0px;top:559.00px">22</div>
<div class="dot" style="left:49.8px;top:559.85px"></div>
<div class="code" style="left:88.00px;top:559.00px"><span class="k">select</span> <span class="f">min</span>(salary) <span class="k">as</span> lowsalary <span class="k">from</span> try;</div>
<div class="ln" style="left:0.0px;top:585.00px">23</div>
<div class="dot" style="left:49.8px;top:586.10px"></div>
<div class="code" style="left:88.00px;top:585.00px"><span class="k">select</span> <span class="f">max</span>(salary) <span class="k">as</span> highsalary <span class="k">from</span> try;</div>
<div class="a" style="left:200.5px;top:26.3px;width:2px;height:25.3px;background:#111"></div></div>
<div id="hband" class="a"><div class="a" style="left:21.4px;top:9px;width:918.6px;height:3px;background:#7a7a7a"></div></div>
<div id="outh" class="a">
<div class="a ui" style="left:8.8px;top:5.9px;color:#777;font-size:14px">Output</div>
<svg class="a" style="left:55.0px;top:9.2px" width="1337" height="7"><defs><pattern id="p641" width="5" height="7" patternUnits="userSpaceOnUse"><g fill="#8f8f8f"><rect x="0" y="0" width="1.4" height="1.4"/><rect x="2.6" y="2.6" width="1.4" height="1.4"/><rect x="0" y="5.1" width="1.4" height="1.4"/></g></pattern></defs><rect width="1337" height="7" fill="url(#p641)" fill-opacity="1" style="fill:url(#p641)"/></svg>
</div>
<div id="outtb" class="a">
<svg class="a" style="left:9.5px;top:9.5px" width="18" height="18" viewBox="0 0 18 18"><path d="M5.5 3.5V0.5H16.5V11.5H13.5" fill="none" stroke="#555" stroke-width="1"/><path d="M3.5 5.5V2.5H14.5V13.5H11.5" fill="none" stroke="#555" stroke-width="1"/><rect x="1" y="5" width="11" height="12" fill="none" stroke="#444" stroke-width="1.6"/></svg>
<div class="a" style="left:35px;top:5.6px;width:187.5px;height:25.8px;background:#fff"></div>
<div class="a" style="left:207.7px;top:7px;width:13.3px;height:23px;background:#f0f0f0"></div>
<div class="a" style="left:210px;top:16.6px;width:0;height:0;border-left:4.5px solid transparent;border-right:4.5px solid transparent;border-top:5px solid #111"></div>
<div class="a ui" style="left:41px;top:12.8px;font-size:13px;color:#111">Action Output</div>
</div>
<div id="outtbl" class="a">
<div class="a" style="left:27.1px;top:2px;width:1px;height:9px;background:#dedede"></div>
<div class="a" style="left:72.1px;top:2px;width:1px;height:9px;background:#dedede"></div>
<div class="a" style="left:135.6px;top:2px;width:1px;height:9px;background:#dedede"></div>
<div class="a" style="left:787.3px;top:2px;width:1px;height:9px;background:#dedede"></div>
<div class="a ui" style="left:37px;top:6.5px;font-size:13px;color:#222">#</div>
<div class="a ui" style="left:79.8px;top:6.5px;font-size:13px;color:#111">Time</div>
<div class="a ui" style="left:146.5px;top:6.5px;font-size:13px;color:#222">Action</div>
<div class="a ui" style="left:796.5px;top:6.5px;font-size:13px;color:#222">Message</div>
</div>
</body></html>
